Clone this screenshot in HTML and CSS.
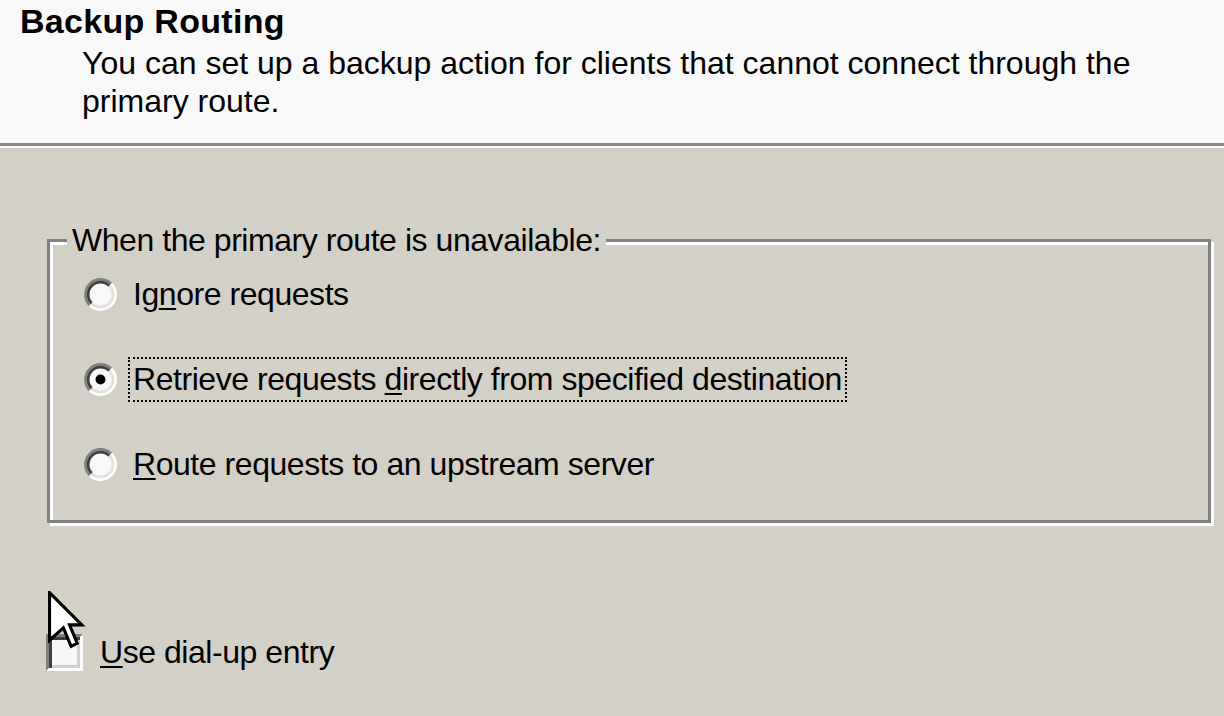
FILE: index.html
```html
<!DOCTYPE html>
<html>
<head>
<meta charset="utf-8">
<title>Backup Routing</title>
<link rel="stylesheet" href="styles.css">
</head>
<body>
<div class="wizard">
  <header class="head">
    <div class="title">Backup Routing</div>
    <div class="subtitle">You can set up a backup action for clients that cannot connect through the<br>primary route.</div>
  </header>
  <main class="page">
    <fieldset class="group">
      <legend class="group-label">When the primary route is unavailable:</legend>
      <div class="options">
        <div class="option">
          <svg class="radio" viewBox="0 0 12 12" width="33" height="33" aria-hidden="true">
            <circle cx="6" cy="6" r="4.2" fill="#f8f8f8"/>
            <path d="M2.111 9.889 A5.5 5.5 0 0 1 9.889 2.111" fill="none" stroke="#808080" stroke-width="1"/>
            <path d="M9.889 2.111 A5.5 5.5 0 0 1 2.111 9.889" fill="none" stroke="#ffffff" stroke-width="1"/>
            <path d="M2.818 9.182 A4.5 4.5 0 0 1 9.182 2.818" fill="none" stroke="#404040" stroke-width="1"/>
            <path d="M9.182 2.818 A4.5 4.5 0 0 1 2.818 9.182" fill="none" stroke="#e4e2dc" stroke-width="1"/>
          </svg>
          <span class="opt-label">Ig<u>n</u>ore requests</span>
        </div>
        <div class="option">
          <svg class="radio" viewBox="0 0 12 12" width="33" height="33" aria-hidden="true">
            <circle cx="6" cy="6" r="4.2" fill="#f8f8f8"/>
            <path d="M2.111 9.889 A5.5 5.5 0 0 1 9.889 2.111" fill="none" stroke="#808080" stroke-width="1"/>
            <path d="M9.889 2.111 A5.5 5.5 0 0 1 2.111 9.889" fill="none" stroke="#ffffff" stroke-width="1"/>
            <path d="M2.818 9.182 A4.5 4.5 0 0 1 9.182 2.818" fill="none" stroke="#404040" stroke-width="1"/>
            <path d="M9.182 2.818 A4.5 4.5 0 0 1 2.818 9.182" fill="none" stroke="#e4e2dc" stroke-width="1"/>
            <circle cx="6" cy="6" r="1.8" fill="#000"/>
          </svg>
          <span class="opt-label focused">Retrieve requests <u>d</u>irectly from specified destination</span>
        </div>
        <div class="option">
          <svg class="radio" viewBox="0 0 12 12" width="33" height="33" aria-hidden="true">
            <circle cx="6" cy="6" r="4.2" fill="#f8f8f8"/>
            <path d="M2.111 9.889 A5.5 5.5 0 0 1 9.889 2.111" fill="none" stroke="#808080" stroke-width="1"/>
            <path d="M9.889 2.111 A5.5 5.5 0 0 1 2.111 9.889" fill="none" stroke="#ffffff" stroke-width="1"/>
            <path d="M2.818 9.182 A4.5 4.5 0 0 1 9.182 2.818" fill="none" stroke="#404040" stroke-width="1"/>
            <path d="M9.182 2.818 A4.5 4.5 0 0 1 2.818 9.182" fill="none" stroke="#e4e2dc" stroke-width="1"/>
          </svg>
          <span class="opt-label"><u>R</u>oute requests to an upstream server</span>
        </div>
      </div>
    </fieldset>
    <div class="check-row">
      <span class="checkbox">
        <svg class="cursor" viewBox="0 0 13 20" width="40" height="61.6" aria-hidden="true">
          <path d="M0.5 0.5 L11 11 L7 11 L9.5 17 L7.5 18 L5 12 L0.5 16 Z" fill="#ffffff" stroke="#000" stroke-width="1" stroke-linejoin="miter"/>
        </svg>
      </span>
      <span class="check-label"><u>U</u>se dial-up entry</span>
    </div>
  </main>
</div>
</body>
</html>
```
FILE: styles.css
```css
* {
  box-sizing: border-box;
}

html,
body {
  margin: 0;
  padding: 0;
}

body {
  width: 1224px;
  height: 716px;
  overflow: hidden;
  background: #d3d0c8;
  font-family: "Liberation Sans", Arial, sans-serif;
  font-size: 32px;
  color: #000;
}

.head {
  height: 146px;
  background: #f8f8f8;
  padding: 3px 0 0 20px;
  border-bottom: 3px solid #8a8a8a;
  box-shadow: 0 2px 0 #ffffff;
}

.title {
  font-size: 34px;
  font-weight: bold;
  line-height: 36px;
  letter-spacing: 0.3px;
}

.subtitle {
  margin: 5px 0 0 62px;
  line-height: 38px;
}

.page {
  padding-top: 76px;
}

.group {
  margin: 0 0 0 47px;
  width: 1164px;
  min-width: 0;
  padding: 14px 0 32.5px 17px;
  border: 3px solid #808080;
  box-shadow: inset 3px 3px 0 #ffffff, 3px 3px 0 #ffffff;
}

.group-label {
  padding: 0 5px;
  line-height: 36px;
  letter-spacing: -0.45px;
  background: #d3d0c8;
}

.options {
  display: flex;
  flex-direction: column;
  gap: 40px;
}

.option {
  display: flex;
  align-items: center;
  height: 45px;
}

.radio {
  flex: none;
  margin-left: 17px;
}

.opt-label {
  margin-left: 11px;
  padding: 2px 3px;
  line-height: 37px;
  letter-spacing: -0.45px;
  border: 2px dotted transparent;
  white-space: nowrap;
}

.opt-label.focused {
  border-color: #000;
}

u {
  text-decoration-thickness: 2px;
  text-underline-offset: 3px;
}

.check-row {
  display: flex;
  align-items: center;
  height: 45px;
  margin-top: 107px;
}

.checkbox {
  position: relative;
  flex: none;
  width: 37px;
  height: 37px;
  margin-left: 46px;
  background: #f6f6f6;
  border-top: 3px solid #808080;
  border-left: 3px solid #808080;
  border-bottom: 3px solid #ffffff;
  border-right: 3px solid #ffffff;
  box-shadow: inset 3px 3px 0 #404040, inset -3px -3px 0 #d4d0c8;
}

.cursor {
  position: absolute;
  left: -1.5px;
  top: -45.5px;
}

.check-label {
  margin-left: 17px;
  line-height: 37px;
  letter-spacing: -0.45px;
}
```
